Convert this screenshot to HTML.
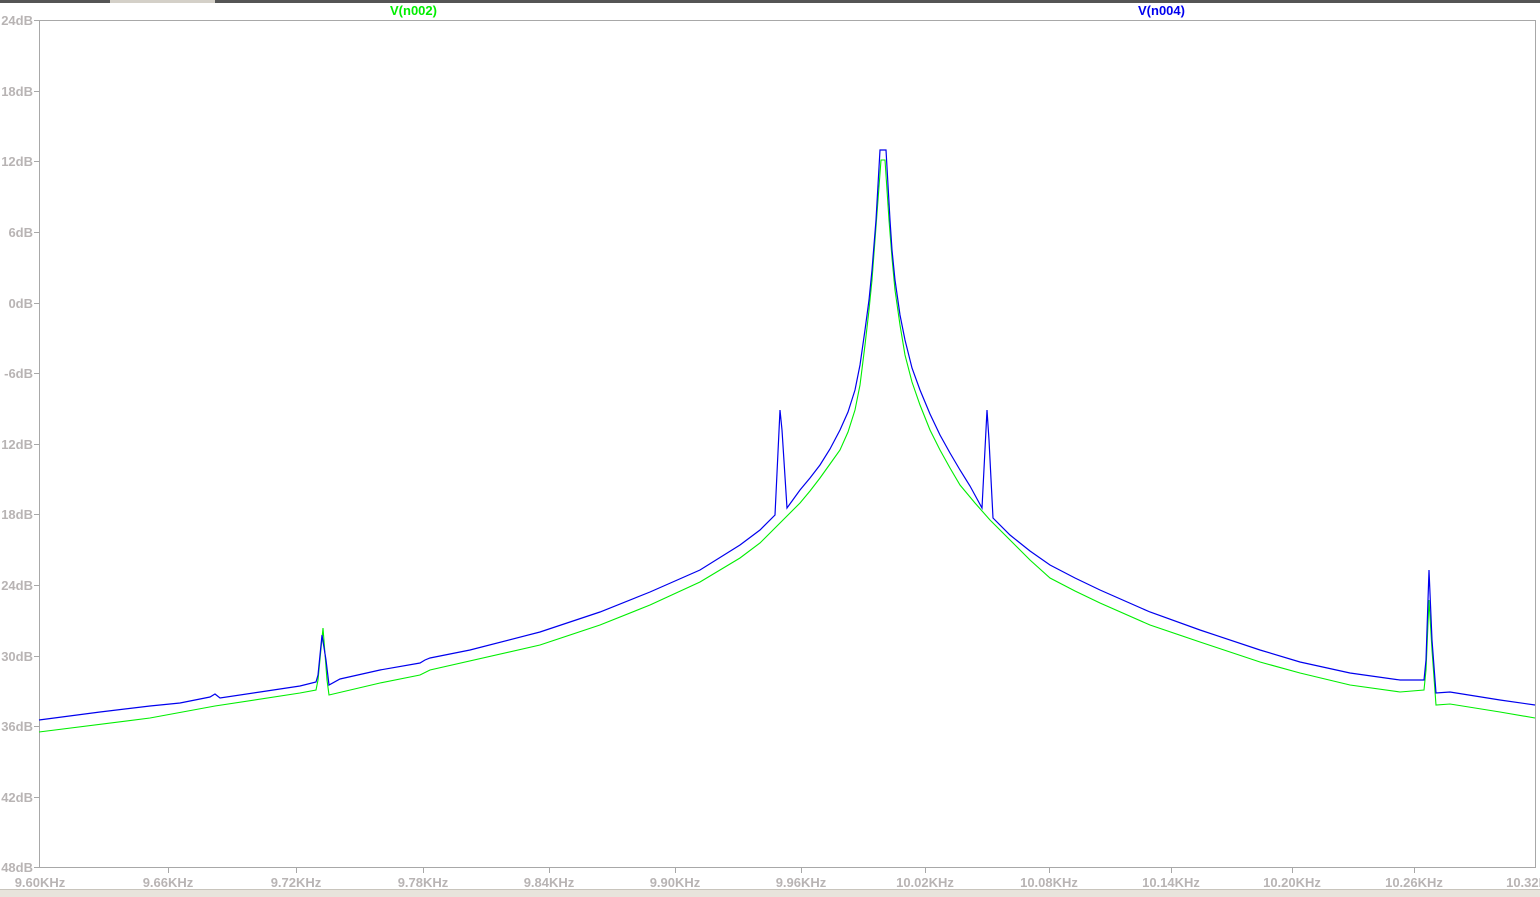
<!DOCTYPE html><html><head><style>
body{margin:0;width:1540px;height:896px;background:#fff;overflow:hidden;font-family:"Liberation Sans",sans-serif;position:relative}
.t{position:absolute;font-size:13px;font-weight:bold;color:#b8b4b4}
</style></head><body>
<div style="position:absolute;left:0;top:0;width:1540px;height:3px;background:#555"></div>
<div style="position:absolute;left:110px;top:0;width:105px;height:3px;background:#d4d0c8"></div>
<div style="position:absolute;left:0;top:889px;width:1540px;height:7px;background:#e8e4dc;border-top:1px solid #c8c4bc"></div>
<div class="t" style="left:390px;top:3px;color:#00ee00">V(n002)</div>
<div class="t" style="left:1138px;top:3px;color:#0000ee">V(n004)</div>
<svg width="1540" height="896" style="position:absolute;left:0;top:0" font-family="Liberation Sans" font-size="13" font-weight="bold" fill="#b8b4b4">
<rect x="39.5" y="20.5" width="1496" height="847" fill="none" stroke="#a8a8a8"/>
<g stroke="#a8a8a8">
<line x1="34" y1="20.5" x2="39" y2="20.5"/><line x1="34" y1="91.5" x2="39" y2="91.5"/><line x1="34" y1="161.5" x2="39" y2="161.5"/><line x1="34" y1="232.5" x2="39" y2="232.5"/><line x1="34" y1="303.5" x2="39" y2="303.5"/><line x1="34" y1="373.5" x2="39" y2="373.5"/><line x1="34" y1="444.5" x2="39" y2="444.5"/><line x1="34" y1="514.5" x2="39" y2="514.5"/><line x1="34" y1="585.5" x2="39" y2="585.5"/><line x1="34" y1="656.5" x2="39" y2="656.5"/><line x1="34" y1="726.5" x2="39" y2="726.5"/><line x1="34" y1="797.5" x2="39" y2="797.5"/><line x1="34" y1="867.5" x2="39" y2="867.5"/>
<line x1="168.5" y1="868" x2="168.5" y2="873"/><line x1="296.5" y1="868" x2="296.5" y2="873"/><line x1="423.5" y1="868" x2="423.5" y2="873"/><line x1="549.5" y1="868" x2="549.5" y2="873"/><line x1="675.5" y1="868" x2="675.5" y2="873"/><line x1="801.5" y1="868" x2="801.5" y2="873"/><line x1="925.5" y1="868" x2="925.5" y2="873"/><line x1="1049.5" y1="868" x2="1049.5" y2="873"/><line x1="1171.5" y1="868" x2="1171.5" y2="873"/><line x1="1292.5" y1="868" x2="1292.5" y2="873"/><line x1="1414.5" y1="868" x2="1414.5" y2="873"/>
</g>
<g text-anchor="end">
<text x="33" y="25">24dB</text><text x="33" y="96">18dB</text><text x="33" y="166">12dB</text><text x="33" y="237">6dB</text><text x="33" y="308">0dB</text><text x="33" y="378">-6dB</text><text x="33" y="449">12dB</text><text x="33" y="519">18dB</text><text x="33" y="590">24dB</text><text x="33" y="661">30dB</text><text x="33" y="731">36dB</text><text x="33" y="802">42dB</text><text x="33" y="872">48dB</text>
</g>
<g text-anchor="middle">
<text x="40" y="887">9.60KHz</text><text x="168" y="887">9.66KHz</text><text x="296" y="887">9.72KHz</text><text x="423" y="887">9.78KHz</text><text x="549" y="887">9.84KHz</text><text x="675" y="887">9.90KHz</text><text x="801" y="887">9.96KHz</text><text x="925" y="887">10.02KHz</text><text x="1049" y="887">10.08KHz</text><text x="1171" y="887">10.14KHz</text><text x="1292" y="887">10.20KHz</text><text x="1414" y="887">10.26KHz</text><text x="1535" y="887">10.32KHz</text>
</g>
<polyline fill="none" stroke="#00ee00" stroke-width="1.1" points="39,732 150,718 215,706 300,693 316,690 318,680 323,628 327,680 329,695 380,683 420,675 430,670 540,645 600,625 650,605 700,582 740,558 760,543 775,528 790,513 800,503 810,491 820,478 830,464 840,450 848,432 855,410 860,385 865,345 869,310 872,280 875,240 878,200 881,160 885,160 887,190 889,220 892,258 895,290 900,325 905,355 912,382 920,405 930,430 940,450 950,468 960,485 975,503 990,520 1010,540 1030,560 1050,578 1075,591 1100,603 1150,625 1200,642 1260,662 1300,673 1350,685 1400,692 1424,690 1426,670 1429,600 1432,650 1436,705 1450,704 1500,712 1535,718"/>
<polyline fill="none" stroke="#0000ee" stroke-width="1.2" points="39,720 100,712 150,706 180,703 210,697 215,694 220,698 260,692 300,686 316,682 318,675 322,635 326,660 329,685 340,679 380,670 420,663 425,660 430,658 470,650 540,632 600,612 650,592 700,570 740,545 760,530 775,515 780,410 782,430 787,508 800,490 810,478 820,465 830,449 840,430 848,412 855,390 860,365 865,330 869,300 872,270 874,245 876,220 878,185 880,150 886,150 888,185 890,220 892,250 895,280 900,315 905,340 912,368 920,390 930,414 940,435 950,453 960,470 970,486 982,508 987,410 989,440 993,518 1010,535 1030,551 1050,565 1075,578 1100,590 1150,612 1200,630 1260,650 1300,662 1350,673 1400,680 1424,680 1426,660 1429,570 1432,640 1436,693 1450,692 1500,700 1535,705"/>
</svg>
</body></html>
